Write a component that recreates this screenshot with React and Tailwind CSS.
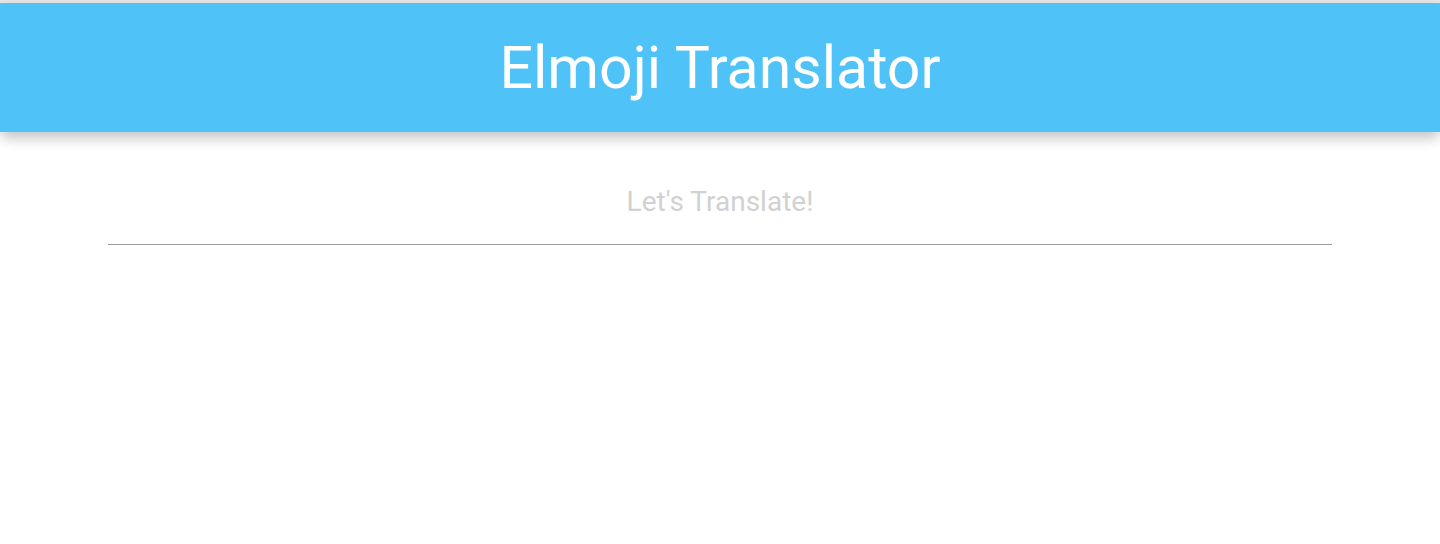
export default function App() {
  return (
    <div className="min-h-[544px] bg-white" style={{ fontFamily: 'Roboto, "Noto Sans", sans-serif' }}>
      <div className="h-[3px] bg-[#e6e6e6]" />
      <header className="flex h-[129px] items-center justify-center bg-[#4fc3f7] shadow-[0_8px_12px_-2px_rgba(0,0,0,0.18),0_4px_16px_0_rgba(0,0,0,0.08)]">
        <h1 className="text-[59px] font-normal leading-none text-white">Elmoji Translator</h1>
      </header>
      <main className="mx-auto mt-[44px] w-[1224px]">
        <input
          type="text"
          placeholder="Let's Translate!"
          className="box-border h-[69px] w-full border-b border-[#9e9e9e] bg-transparent pb-[18px] text-center text-[28px] text-[#333] outline-none placeholder:text-[#d1d1d1]"
        />
      </main>
    </div>
  );
}
